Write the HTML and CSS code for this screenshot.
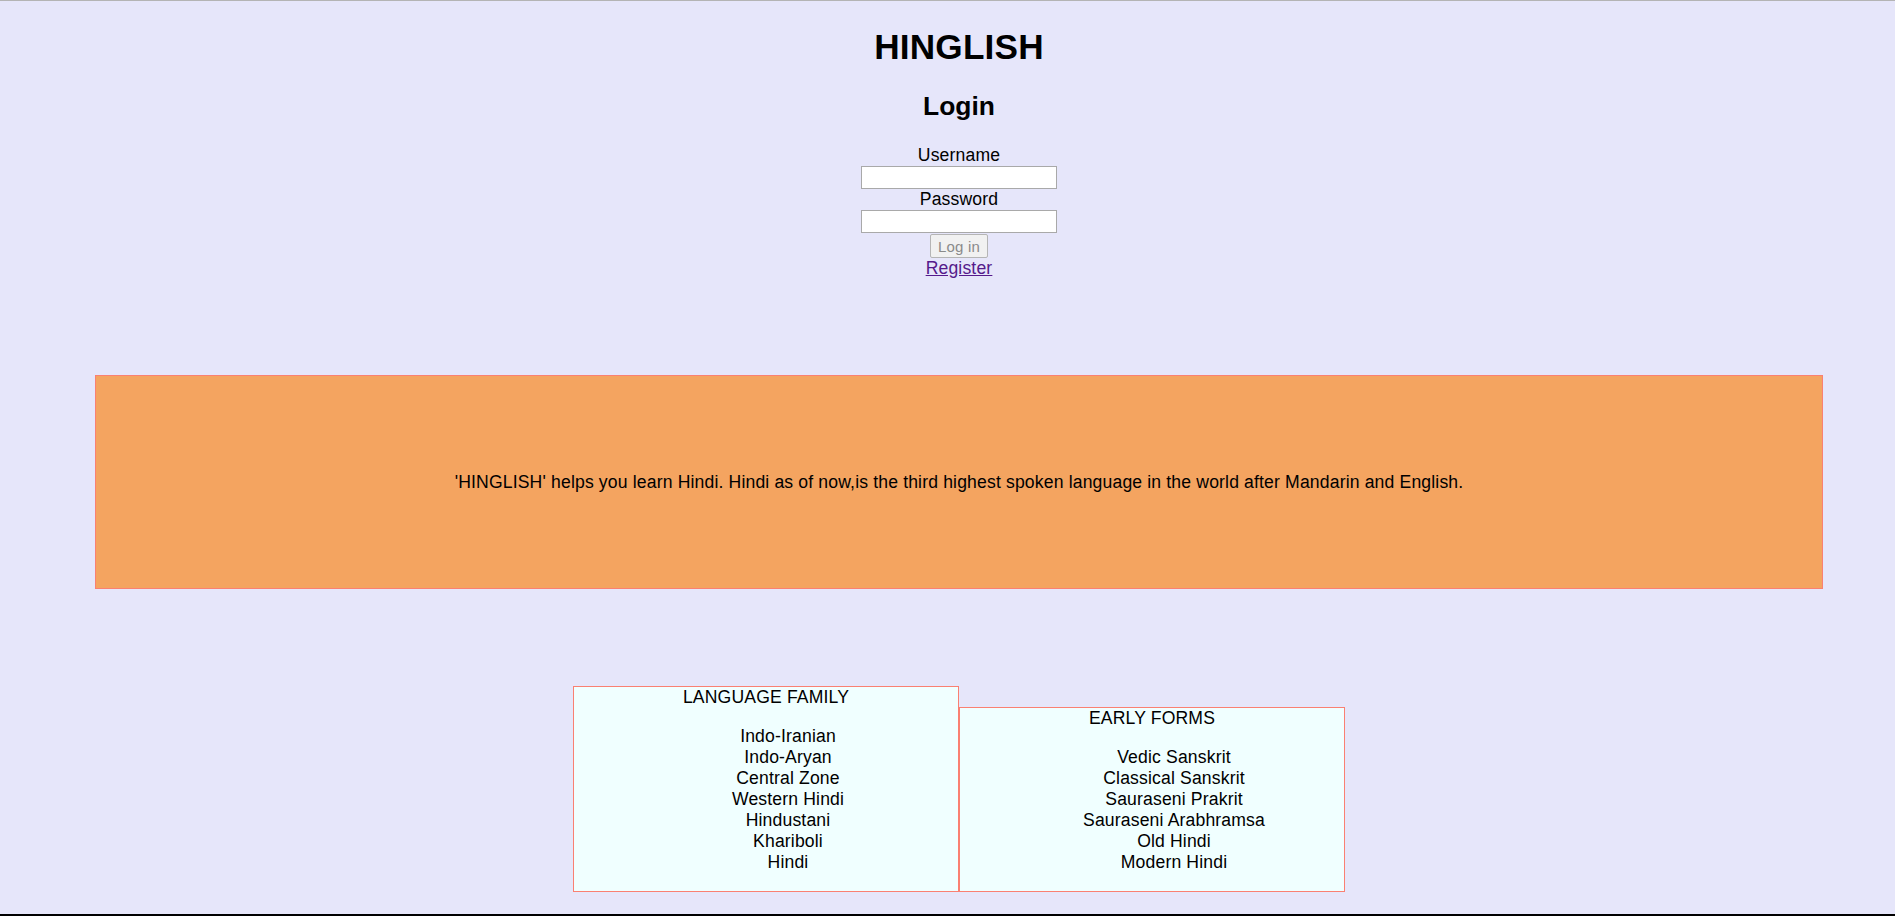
FILE: index.html
```html
<!DOCTYPE html>
<html lang="en">
<head>
<meta charset="utf-8">
<title>HINGLISH</title>
<link rel="stylesheet" href="styles.css">
</head>
<body>
<div class="page">
  <h1 class="title">HINGLISH</h1>
  <h2 class="subtitle">Login</h2>
  <form class="login">
    <label class="field-label" for="u">Username</label>
    <input class="field" id="u" type="text">
    <label class="field-label" for="p">Password</label>
    <input class="field" id="p" type="password">
    <button class="btn" type="button" disabled>Log in</button>
    <a class="register" href="#">Register</a>
  </form>
  <div class="banner">'HINGLISH' helps you learn Hindi. Hindi as of now,is the third highest spoken language in the world after Mandarin and English.</div>
  <div class="cards">
    <div class="card">
      <div class="card-title">LANGUAGE FAMILY</div>
      <ul class="card-list">
        <li>Indo-Iranian</li>
        <li>Indo-Aryan</li>
        <li>Central Zone</li>
        <li>Western Hindi</li>
        <li>Hindustani</li>
        <li>Khariboli</li>
        <li>Hindi</li>
      </ul>
    </div>
    <div class="card">
      <div class="card-title">EARLY FORMS</div>
      <ul class="card-list">
        <li>Vedic Sanskrit</li>
        <li>Classical Sanskrit</li>
        <li>Sauraseni Prakrit</li>
        <li>Sauraseni Arabhramsa</li>
        <li>Old Hindi</li>
        <li>Modern Hindi</li>
      </ul>
    </div>
  </div>
</div>
</body>
</html>
```
FILE: styles.css
```css
html, body {
  margin: 0;
  padding: 0;
}
body {
  background: #e6e6fa;
  color: #000;
  font-family: "Liberation Sans", Arial, sans-serif;
  font-size: 17.6px;
  letter-spacing: 0.15px;
  height: 916px;
  box-sizing: border-box;
  border-top: 1px solid #b4b4b4;
  border-bottom: 2px solid #000;
  overflow: hidden;
}
.page {
  padding: 25px 0 0 23px;
  display: flex;
  flex-direction: column;
  align-items: center;
}
.title {
  margin: 0;
  font-size: 35.2px;
  line-height: 41px;
  font-weight: bold;
  letter-spacing: 0.2px;
}
.subtitle {
  margin: 24px 0 24px;
  font-size: 26.4px;
  line-height: 30px;
  font-weight: bold;
  letter-spacing: 0;
}
.login {
  display: flex;
  flex-direction: column;
  align-items: center;
}
.field-label {
  display: block;
  line-height: 21px;
}
.field {
  display: block;
  box-sizing: border-box;
  width: 196px;
  height: 23px;
  margin: 0;
  padding: 1px 2px;
  border: 1px solid #a9a9a9;
  background: #fff;
  font-family: "Liberation Sans", Arial, sans-serif;
  font-size: 14.7px;
}
.btn {
  display: block;
  box-sizing: border-box;
  width: 58px;
  height: 24px;
  margin: 1px 0 0;
  padding: 0;
  border: 1px solid #b5b5b5;
  border-radius: 2px;
  background: #f1f1f1;
  color: #8a8a8a;
  font-family: "Liberation Sans", Arial, sans-serif;
  font-size: 15px;
  letter-spacing: 0.2px;
}
.register {
  display: block;
  line-height: 21px;
  color: #551a8b;
  text-decoration: underline;
}
.banner {
  box-sizing: border-box;
  width: 1728px;
  height: 214px;
  margin-top: 96px;
  border: 1px solid #fa8072;
  background: #f4a460;
  display: flex;
  align-items: center;
  justify-content: center;
  line-height: 21px;
}
.cards {
  margin-top: 97px;
  display: flex;
  align-items: flex-end;
}
.card {
  box-sizing: border-box;
  width: 386px;
  border: 1px solid #fa8072;
  background: #f0ffff;
  text-align: center;
  line-height: 21px;
}
.card-title {
  line-height: 21px;
}
.card-list {
  list-style: none;
  margin: 18px 0;
  padding: 0 0 0 44px;
}
.card-list li {
  line-height: 21px;
}
```
